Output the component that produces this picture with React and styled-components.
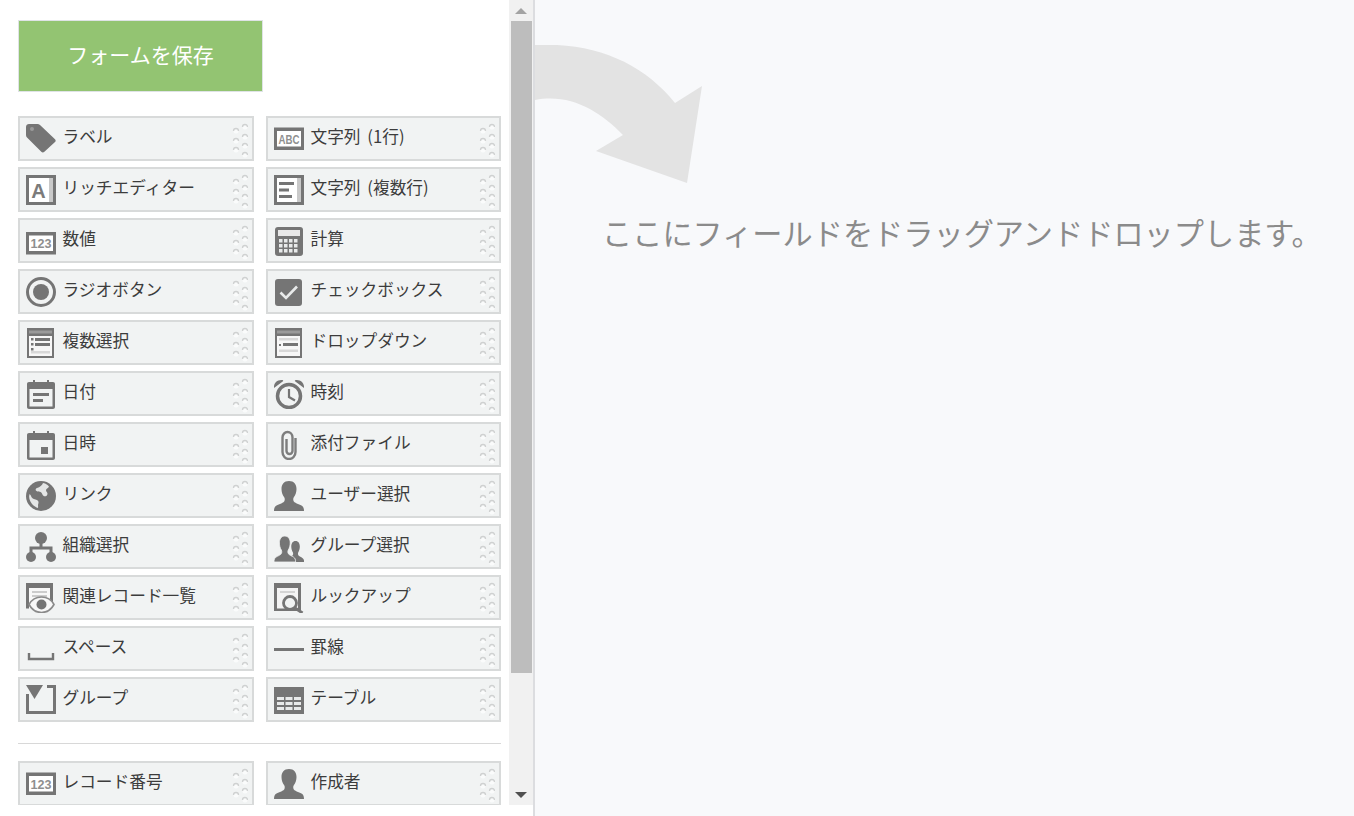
import React from "react";
import styled, { createGlobalStyle } from "styled-components";

const Global = createGlobalStyle`
  html, body { margin: 0; padding: 0; height: 100%; background: #f8f9fb; }
  #root { height: 100%; }
  * { box-sizing: border-box; }
`;

const FONT = `"Noto Sans CJK JP", "Noto Sans", sans-serif`;
const G = "#757575";

const Page = styled.div`
  display: flex;
  width: 1354px;
  height: 816px;
  overflow: hidden;
  font-family: ${FONT};
`;
const Side = styled.aside`
  flex: 0 0 535px;
  height: 816px;
  background: #fff;
  border-right: 2px solid #dcdde0;
`;
const SideInner = styled.div`
  display: flex;
  height: 805px;
  overflow: hidden;
`;
const Palette = styled.div`
  flex: 0 0 509px;
  padding: 20px 8px 0 18px;
`;
const SaveButton = styled.button`
  display: block;
  width: 245px;
  height: 72px;
  padding: 0 0 4px;
  background: #93c472;
  border: 1px solid #dfe3e6;
  color: #fff;
  font-family: ${FONT};
  font-size: 21px;
  font-weight: 400;
  margin-bottom: 24px;
`;
const Grid = styled.div`
  display: grid;
  grid-template-columns: 236px 235px;
  column-gap: 12px;
  row-gap: 6px;
`;
const Divider = styled.hr`
  width: 483px;
  height: 1px;
  margin: 21px 0 17px;
  border: 0;
  background: #d8d8d8;
`;
const Item = styled.div`
  display: flex;
  align-items: center;
  height: 45px;
  padding: 0 4px 0 6px;
  background: #f1f3f3;
  border: 2px solid #d8dada;
`;
const IconBox = styled.svg`
  flex: 0 0 30px;
  width: 30px;
  height: 30px;
  display: block;
`;
const Label = styled.span`
  margin-left: 6.5px;
  flex: 1;
  font-size: 16.7px;
  line-height: 24px;
  word-spacing: 3px;
  color: #3c3c3c;
  white-space: nowrap;
  position: relative;
  top: -3px;
`;
const GripSvg = styled.svg`
  flex: 0 0 17px;
  width: 17px;
  height: 38px;
  display: block;
`;
const Scrollbar = styled.div`
  flex: 0 0 24px;
  display: flex;
  flex-direction: column;
  align-items: center;
  background: #f1f1f1;
  height: 805px;
`;
const ScrollArrow = styled.div`
  flex: 0 0 21px;
  height: 21px;
  display: flex;
  align-items: center;
  justify-content: center;
  &::before {
    content: "";
    width: 0;
    height: 0;
    border-left: 6px solid transparent;
    border-right: 6px solid transparent;
    ${p => p.$down ? "border-top: 6px solid #505050;" : "border-bottom: 6px solid #a3a3a3;"}
  }
`;
const Thumb = styled.div`
  width: 21px;
  height: 652px;
  background: #bdbdbd;
`;
const ScrollGap = styled.div`
  flex: 1;
`;
const Main = styled.main`
  flex: 1;
  height: 816px;
  padding-top: 45px;
  background: #f8f9fb;
`;
const Arrow = styled.svg`
  display: block;
  width: 168px;
  height: 139px;
`;
const DropText = styled.p`
  margin: 27px 0 0 67px;
  font-size: 30.2px;
  line-height: 42px;
  color: #8b8b8b;
  white-space: nowrap;
`;

const Grip = () => (
  <GripSvg viewBox="0 0 17 38">
    {[[2.5, 8], [2.5, 18], [2.5, 27], [11.5, 4], [11.5, 14], [11.5, 23], [11.5, 32]].map(([x, y]) => (
      <g key={x + "-" + y}>
        <circle cx={x + 2.5} cy={y + 3} r="2.5" fill="#fafbfb" />
        <path d={`M${x} ${y + 3}a2.500 2.500 0 0 1 5 0`} fill="none" stroke="#cfd1d1" strokeWidth="1.300" />
      </g>
    ))}
  </GripSvg>
);

const Frame = () => (
  <>
    <rect x="0" y="0" width="30" height="30" fill={G} />
    <rect x="3" y="3" width="24" height="24" fill="#fff" />
    <rect x="23" y="3" width="4" height="24" fill="#c9c9c9" />
  </>
);

const TextFrame = ({ children, y }) => (
  <>
    <rect x="0" y={y} width="30" height="22.500" fill={G} />
    <rect x="3" y={y + 3.5} width="24" height="15.500" fill="#fff" />
    <text x="4.500" y={y + 16} textLength="21" lengthAdjust="spacingAndGlyphs" fontFamily="Liberation Sans" fontWeight="700" fontSize="13" fill="#8f8f8f">{children}</text>
  </>
);

const SHOULDERS = "M15 0c-5 0-7.500 3.500-7.500 8 0 3 1 6 2.700 8.200.6 1 .7 2 .4 3.200C10 22 5 23 2.500 24.500 .8 25.500 0 27 0 30h30c0-3-.8-4.500-2.500-5.500C25 23 20 22 19.400 19.400c-.3-1.200-.2-2.200.4-3.200C21.500 14 22.500 11 22.500 8 22.500 3.500 20 0 15 0z";

const CalendarBase = ({ children }) => (
  <>
    <path d="M3 3h4V1h2v2h12V1h2v2h4c1.200 0 2 .8 2 2v23c0 1.200-.8 2-2 2H3c-1.200 0-2-.8-2-2V5c0-1.200.8-2 2-2z" fill={G} />
    <rect x="3.500" y="10" width="23" height="17.500" fill="#f1f3f3" />
    {children}
  </>
);

const icons = {
  tag: (
    <>
      <path d="M3 0h8.500c1 0 1.800.4 2.500 1l15 14.200c.9.900.9 2 0 2.900L18.400 27.800c-1 1-2.200 1-3.100 0L1 13.500c-.6-.6-1-1.500-1-2.500V3c0-1.700 1.300-3 3-3z" fill={G} />
      <circle cx="6" cy="5" r="2" fill="#9a9a9a" />
    </>
  ),
  rich: <><Frame /><text x="12.500" y="23" textAnchor="middle" fontFamily="Liberation Sans" fontWeight="700" fontSize="20" fill="#7b7b7b">A</text></>,
  num: <TextFrame y={6}>123</TextFrame>,
  numLow: <TextFrame y={3.5}>123</TextFrame>,
  abc: <TextFrame y={3.5}>ABC</TextFrame>,
  multi: <><Frame /><rect x="5" y="7" width="15" height="3" fill={G} /><rect x="5" y="13.500" width="10" height="3" fill={G} /><rect x="5" y="20" width="13" height="3" fill={G} /></>,
  calc: (
    <>
      <rect x="1" y="1" width="28" height="29" rx="3" fill={G} />
      <rect x="4" y="4" width="22" height="6" fill="#e8e8e8" />
      {[13, 18, 23].map(y => [5, 10, 15, 20].map(x => <rect key={x + "-" + y} x={x} y={y} width="3.500" height="3.500" fill="#e8eaea" />))}
    </>
  ),
  check: <><rect x="1" y="2" width="27" height="27" rx="3" fill={G} /><path d="M6.500 15.500l5.500 5.500L23 9.500" fill="none" stroke="#e8eaea" strokeWidth="2.600" /></>,
  radio: <><circle cx="15" cy="15" r="13.500" fill="none" stroke={G} strokeWidth="3" /><circle cx="15" cy="15" r="8" fill={G} /></>,
  listbox: (
    <>
      <rect x="1" y="0" width="27" height="30" fill={G} />
      <rect x="3" y="2.500" width="23" height="3" fill="#9a9a9a" />
      <rect x="3" y="8" width="23" height="20" fill="#f7f7f7" />
      <rect x="5" y="10" width="2.500" height="2.500" fill={G} /><rect x="9" y="10" width="15" height="3" fill={G} />
      <rect x="5" y="15" width="2.500" height="2.500" fill={G} /><rect x="9" y="15" width="15" height="3" fill={G} />
      <rect x="5" y="20" width="2.500" height="2.500" fill={G} />
      <rect x="5" y="23" width="19" height="2.500" fill="#d8d8d8" />
    </>
  ),
  dropdown: (
    <>
      <rect x="1" y="0" width="27" height="30" fill={G} />
      <rect x="3" y="2.500" width="23" height="3" fill="#9a9a9a" />
      <rect x="3" y="8" width="23" height="20" fill="#f7f7f7" />
      <rect x="5" y="10" width="19" height="2.500" fill="#d8d8d8" />
      <rect x="5" y="16" width="2" height="2" fill={G} /><rect x="9" y="15" width="15" height="3" fill={G} />
      <rect x="5" y="21.500" width="19" height="2.500" fill="#d8d8d8" />
    </>
  ),
  date: (
    <CalendarBase>
      <rect x="7" y="14" width="16" height="3" fill={G} />
      <rect x="7" y="20" width="10" height="3" fill={G} />
    </CalendarBase>
  ),
  datetime: (
    <CalendarBase>
      <rect x="15" y="17" width="7" height="7" fill={G} />
    </CalendarBase>
  ),
  time: (
    <>
      <circle cx="15" cy="17" r="11.500" fill="none" stroke={G} strokeWidth="3.500" />
      <path d="M15 10v8l6 3.500" fill="none" stroke={G} strokeWidth="2.200" />
      <path d="M0 9C-.5 4.500 3 .5 8 1c1 .1 1.500.7 1 1.200zM30 9c.5-4.500-3-8.500-8-8-1 .1-1.500.7-1 1.200z" fill={G} />
    </>
  ),
  clip: <path d="M21.500 8V22a6.500 7 0 0 1-13 0V7.500a5 5.500 0 0 1 10 0V21a3 3 0 0 1-6 0V9" fill="none" stroke="#7d7d7d" strokeWidth="2.400" />,
  user: <path d={SHOULDERS} fill={G} />,
  group: (
    <>
      <path transform="translate(13 9) scale(.57 .7)" d={SHOULDERS} fill={G} />
      <path transform="translate(0 4) scale(.72 .867)" d={SHOULDERS} fill={G} stroke="#f1f3f3" strokeWidth="1" />
    </>
  ),
  org: (
    <>
      <circle cx="15" cy="6" r="6" fill={G} />
      <circle cx="5" cy="25" r="5" fill={G} />
      <circle cx="25" cy="25" r="5" fill={G} />
      <path d="M15 10v6M5 22v-6h20v6" fill="none" stroke={G} strokeWidth="3" />
    </>
  ),
  globe: (
    <>
      <circle cx="15" cy="15" r="15" fill={G} />
      <path d="M17 2c-1 2.500-3 4-6 5-1.500.7-2 2-.5 3 1.500.8 3 .2 4.500 1.200 1.500 1 1 3 3 4 1.500.5 3.500-.5 3.500-2.500 0-1.500-1.500-2-1.500-3.500 0-1.500 2-2 3-3.500C22 4 20 2.500 17 2zM3.500 13c-1 3 0 7 2.500 10 2 2 4 3.500 6 4 .5-1.500-.5-3 .5-5 .5-2-1-3-3-3.500C7 18 5.500 17 5 15c-.3-1-1-1.500-1.500-2z" fill="#e4e6e6" />
    </>
  ),
  related: (
    <>
      <path d="M0 0h27v22H3v3.500H0z" fill={G} />
      <rect x="3" y="5" width="21" height="20" fill="#f8f8f8" />
      <rect x="6" y="8" width="15" height="2" fill="#ccc" />
      <rect x="6" y="12" width="15" height="2" fill="#ccc" />
      <path d="M3 21.500C6 16 10 14 15.500 14s9.500 2 12.500 7.500C25 27 21 29.500 15.500 29.500S6 27 3 21.500z" fill="#f8f8f8" stroke="#8a8a8a" strokeWidth="1.600" />
      <circle cx="15.500" cy="21.500" r="5" fill={G} />
    </>
  ),
  lookup: (
    <>
      <path d="M0 0h27v28H0z" fill={G} />
      <rect x="3" y="5" width="21" height="20.500" fill="#f4f4f4" />
      <rect x="6" y="8" width="15" height="2" fill="#d4d4d4" />
      <circle cx="16" cy="20" r="6.500" fill="#f1f3f3" stroke={G} strokeWidth="2.800" />
      <path d="M21 25L28.500 30" stroke={G} strokeWidth="3" />
    </>
  ),
  space: <path d="M3 19v6h24v-6" fill="none" stroke={G} strokeWidth="2.400" />,
  line: <rect x="0" y="14" width="30" height="3" fill={G} />,
  groupBox: (
    <>
      <path d="M21 1.500h7.500v26h-27V9" fill="none" stroke={G} strokeWidth="3" />
      <path d="M0 0h17l-8.500 14z" fill={G} />
    </>
  ),
  table: (
    <>
      <rect x="0" y="2" width="30" height="27" fill={G} />
      {[12, 17, 22].map(y => [3, 11.500, 20].map(x => <rect key={x + "-" + y} x={x} y={y} width="7" height="3" fill="#e8eaea" />))}
    </>
  ),
};

const fields = [
  ["tag", "ラベル"], ["abc", "文字列 (1行)"],
  ["rich", "リッチエディター"], ["multi", "文字列 (複数行)"],
  ["num", "数値"], ["calc", "計算"],
  ["radio", "ラジオボタン"], ["check", "チェックボックス"],
  ["listbox", "複数選択"], ["dropdown", "ドロップダウン"],
  ["date", "日付"], ["time", "時刻"],
  ["datetime", "日時"], ["clip", "添付ファイル"],
  ["globe", "リンク"], ["user", "ユーザー選択"],
  ["org", "組織選択"], ["group", "グループ選択"],
  ["related", "関連レコード一覧"], ["lookup", "ルックアップ"],
  ["space", "スペース"], ["line", "罫線"],
  ["groupBox", "グループ"], ["table", "テーブル"],
];
const systemFields = [["numLow", "レコード番号"], ["user", "作成者"]];

const Field = ({ icon, label }) => (
  <Item>
    <IconBox viewBox="0 0 30 30">{icons[icon]}</IconBox>
    <Label>{label}</Label>
    <Grip />
  </Item>
);

export default function App() {
  return (
    <Page>
      <Global />
      <Side>
        <SideInner>
          <Palette>
            <SaveButton>フォームを保存</SaveButton>
            <Grid>
              {fields.map(([i, l]) => <Field key={l} icon={i} label={l} />)}
            </Grid>
            <Divider />
            <Grid>
              {systemFields.map(([i, l]) => <Field key={l} icon={i} label={l} />)}
            </Grid>
          </Palette>
          <Scrollbar>
            <ScrollArrow />
            <Thumb />
            <ScrollGap />
            <ScrollArrow $down />
          </Scrollbar>
        </SideInner>
      </Side>
      <Main>
        <Arrow viewBox="0 0 168 139">
          <path d="M0 0C60-3 108 18 140 58L167 41 152 138 61 106 88 90C65 66 35 48 0 55z" fill="#e3e3e3" />
        </Arrow>
        <DropText>ここにフィールドをドラッグアンドドロップします。</DropText>
      </Main>
    </Page>
  );
}
